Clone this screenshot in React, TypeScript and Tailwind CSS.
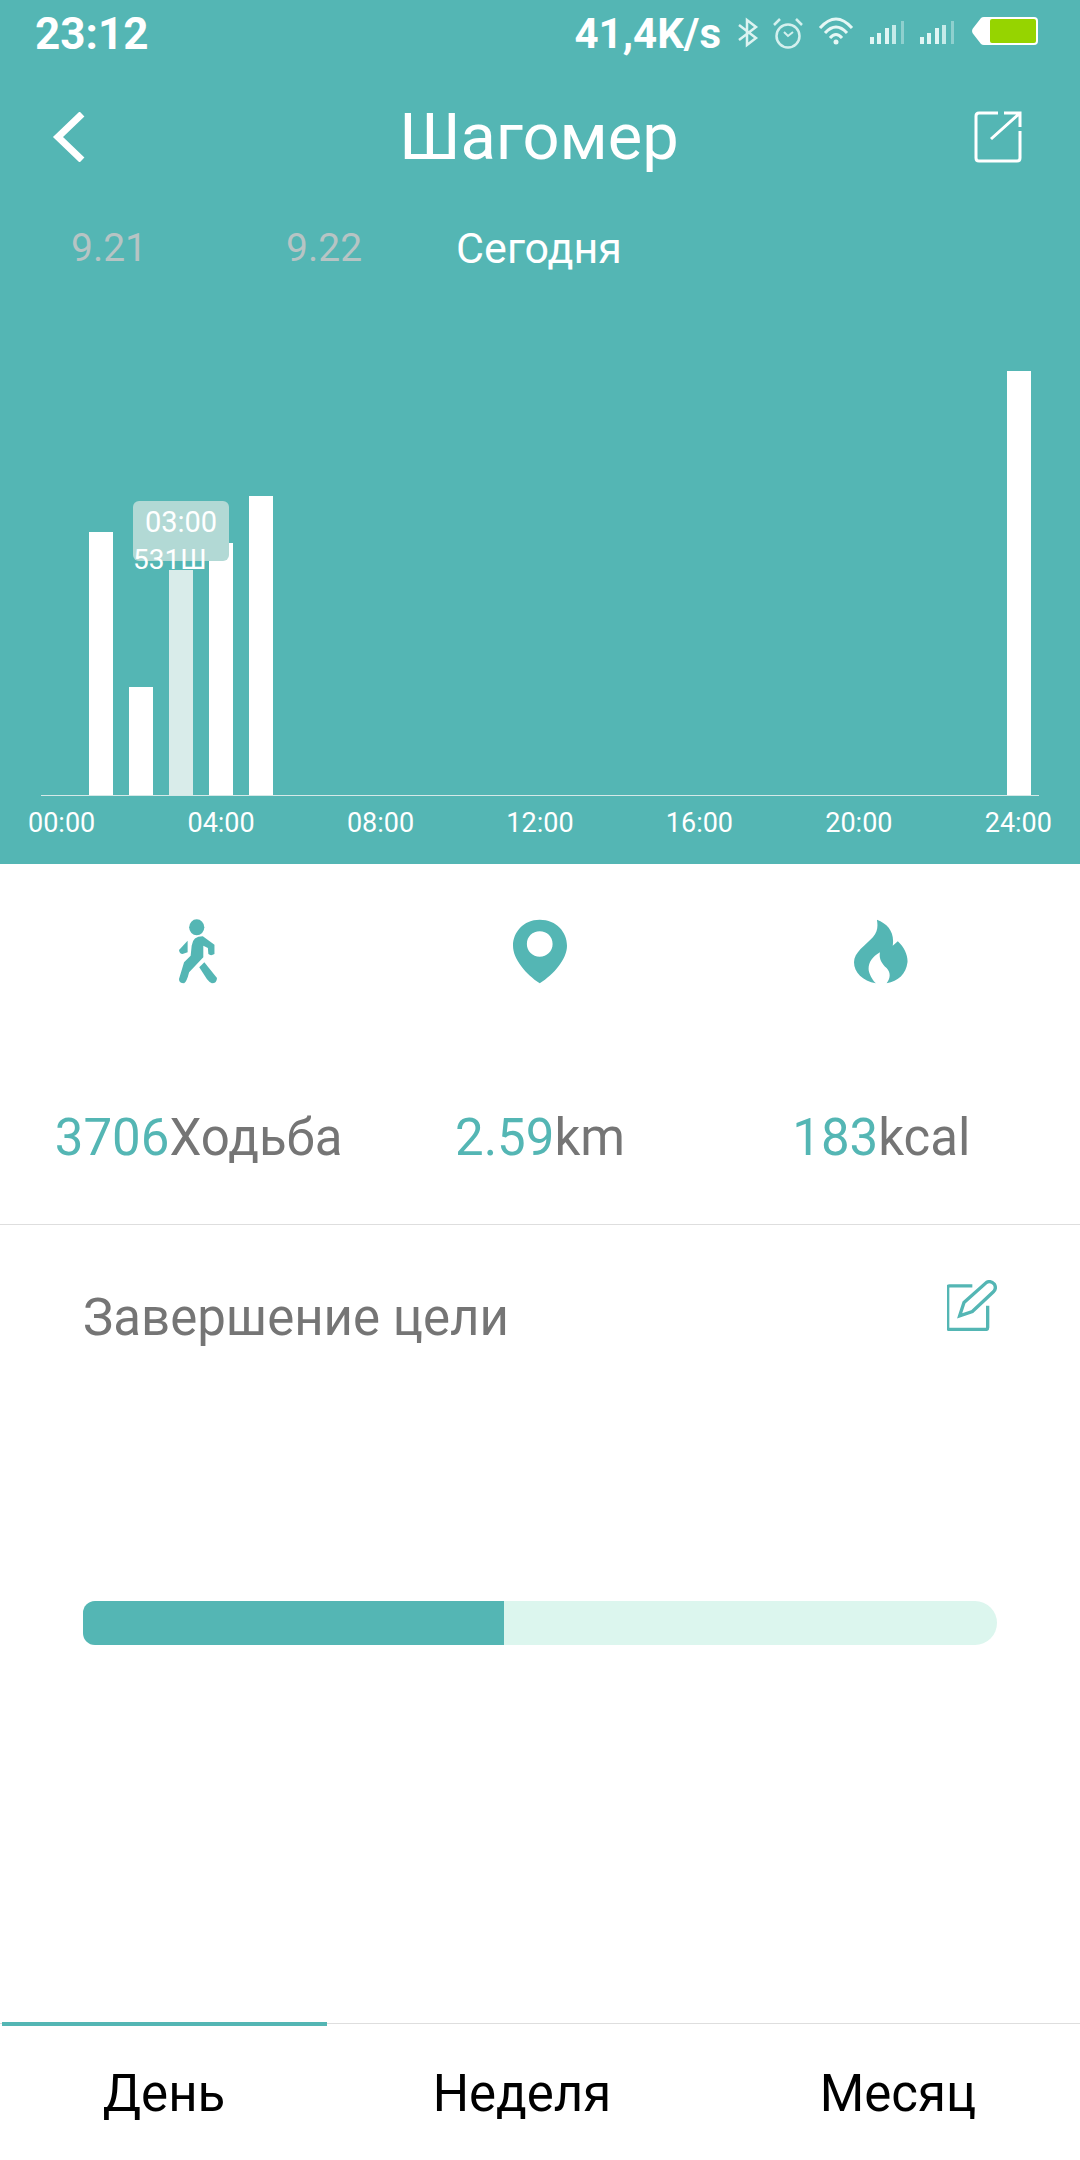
import React from 'react';

const bars = [
  { h: 263, light: false },
  { h: 108, light: false },
  { h: 225, light: true },
  { h: 252, light: false },
  { h: 299, light: false },
];

const hours = ['00:00', '04:00', '08:00', '12:00', '16:00', '20:00', '24:00'];

// coordinates here are page pixels, the svg sits at x=730 inside the 68px status bar
function StatusIcons() {
  return (
    <svg width="320" height="68" viewBox="730 0 320 68" className="shrink-0">
      <path d="M739 25 L756 38 L747 45 L747 20 L756 27 L739 40" fill="none" stroke="#ddf3f1" strokeWidth="2.5" />
      <circle cx="788" cy="36" r="11.5" fill="none" stroke="#d4f0ee" strokeWidth="2.5" />
      <path d="M784 32 L788 36 L793 32" fill="none" stroke="#d4f0ee" strokeWidth="2" />
      <path d="M774 25 L780 19 M802 25 L796 19" stroke="#d4f0ee" strokeWidth="2.5" />
      <path d="M820 28 Q836 10 852 28" fill="none" stroke="#e6f7f5" strokeWidth="3" />
      <path d="M825 33 Q836 21 847 33" fill="none" stroke="#e6f7f5" strokeWidth="3" />
      <path d="M830 38 Q836 31 842 38" fill="none" stroke="#e6f7f5" strokeWidth="3" />
      <circle cx="836" cy="42" r="2.5" fill="#e6f7f5" />
      {[0, 50].map((dx) => (
        <g key={dx} transform={`translate(${dx} 0)`}>
          <rect x="870" y="37" width="4" height="7" fill="#e2f6f5" />
          <rect x="877" y="33" width="4" height="11" fill="#e2f6f5" />
          <rect x="885" y="28" width="4" height="16" fill="#e2f6f5" />
          <rect x="892" y="25" width="4" height="19" fill="#c5ebe9" />
          <rect x="901" y="21" width="3" height="23" fill="#8fd0ce" />
        </g>
      ))}
      <path d="M972 31 Q972 29 974 27 L981 18 Q982 17 984 17 L1034 17 Q1038 17 1038 21 L1038 41 Q1038 45 1034 45 L984 45 Q982 45 981 44 L974 35 Q972 33 972 31 Z" fill="#ffffff" />
      <rect x="990" y="19" width="46" height="24" rx="2" fill="#96d400" />
    </svg>
  );
}

function WalkIcon() {
  return (
    <svg width="39" height="65" viewBox="75 85 77 195" preserveAspectRatio="none" fill="#54b6b4">
      <ellipse cx="110" cy="110" rx="15" ry="24" />
      <path d="M92 150 L75 178 Q76 190 82 190 L92 185 Z" />
      <path d="M100 165 Q102 137 122 137 L145 162 L145 190 Q138 197 133 190 L132 172 L123 165 L123 200 L95 245 Q90 275 85 278 Q75 278 75 265 L85 215 L98 195 Z" />
      <path d="M115 230 L125 215 L150 262 Q150 278 140 278 Q135 275 130 265 Z" />
    </svg>
  );
}

function PinIcon() {
  return (
    <svg width="54" height="65" viewBox="730 85 105 195" preserveAspectRatio="none" fill="#54b6b4">
      <path fillRule="evenodd" d="M782 87 C815 87 835 125 835 165 C835 205 810 250 782 278 C755 250 730 205 730 165 C730 125 750 87 782 87 Z M782 122 C768 122 757 138 757 160 C757 182 768 198 782 198 C796 198 807 182 807 160 C807 138 796 122 782 122 Z" />
    </svg>
  );
}

function FlameIcon() {
  return (
    <svg width="54" height="65" viewBox="1398 85 106 195" preserveAspectRatio="none" fill="#54b6b4">
      <path d="M1443 87 C1465 100 1478 125 1474 165 L1484 152 C1497 170 1504 195 1503 215 C1500 250 1485 272 1462 278 C1470 262 1470 245 1462 232 C1450 215 1447 200 1449 185 C1432 200 1425 220 1427 240 C1430 258 1435 268 1441 278 C1415 272 1398 245 1398 215 C1398 185 1420 165 1435 140 C1445 122 1445 105 1443 87 Z" />
    </svg>
  );
}

export default function App() {
  return (
    <div className="w-[1080px] h-[2160px] bg-white flex flex-col overflow-hidden" style={{ fontFamily: 'Roboto, "Noto Sans", sans-serif' }}>
      {/* teal header + chart */}
      <div className="bg-[#54b6b4] h-[864px] flex flex-col shrink-0">
        <div className="h-[68px] pl-[35px] pr-[30px] flex items-center justify-between text-white font-bold leading-none">
          <span className="text-[44px]">23:12</span>
          <div className="flex items-center gap-[9px]">
            <span className="text-[42px]">41,4K/s</span>
            <StatusIcons />
          </div>
        </div>

        <div className="h-[138px] pl-[52px] pr-[58px] flex items-center justify-between text-white">
          <svg width="33" height="50" viewBox="0 0 33 50" fill="none" stroke="#fff" strokeWidth="7">
            <path d="M30 2 L6 25 L30 48" />
          </svg>
          <span className="ml-[19px] text-[65px] leading-none">Шагомер</span>
          <svg width="48" height="52" viewBox="0 0 48 52" fill="none" stroke="#fff" strokeWidth="3">
            <path d="M24 2 L5 2 Q2 2 2 5 L2 47 Q2 50 5 50 L43 50 Q46 50 46 47 L46 20" />
            <path d="M17 28 L46 2 M30 2 L46 2 L46 16" />
          </svg>
        </div>

        <div className="flex items-center h-[84px] leading-none">
          <span className="ml-[71px] text-[39px] text-[#b7c4c4]">9.21</span>
          <span className="ml-[139px] text-[39px] text-[#b7c4c4]">9.22</span>
          <span className="ml-[94px] text-[43px] text-white">Сегодня</span>
        </div>

        {/* chart */}
        <div className="relative h-[425px] mt-[80px] mx-[41px] border-b-[1px] border-[#d5e9e8] flex items-end pl-[48px] pr-[8px] gap-[16px] box-content">
          {bars.map((b, i) => (
            <div key={i} className={`w-[24px] ${b.light ? 'bg-[#d9ecea]' : 'bg-white'}`} style={{ height: b.h }} />
          ))}
          <div className="w-[24px] ml-auto h-[424px] bg-white" />

          {/* tooltip */}
          <div className="absolute left-[92px] top-[131px] w-[96px] h-[60px] rounded-[6px] bg-[#b2d9d5] text-white text-[29px] leading-none flex justify-center pt-[7px]">
            03:00
          </div>
          <span className="absolute left-[92px] top-[176px] text-white text-[28px] leading-none">531Ш</span>
        </div>

        <div className="flex justify-between pl-[28px] pr-[28px] mt-[14px] text-white text-[27px] leading-none">
          {hours.map((h) => (
            <span key={h}>{h}</span>
          ))}
        </div>
      </div>

      {/* stats */}
      <div className="h-[361px] border-b-[1px] border-[#dedede] shrink-0 px-[28px]">
        <div className="grid grid-cols-3 pt-[55px] h-[186px]">
          <div className="flex justify-center"><WalkIcon /></div>
          <div className="flex justify-center"><PinIcon /></div>
          <div className="flex justify-center"><FlameIcon /></div>
        </div>
        <div className="grid grid-cols-3 text-[51px] leading-none text-[#757575] mt-[62px]">
          <div className="text-center whitespace-nowrap"><span className="text-[#54b6b4]">3706</span>Ходьба</div>
          <div className="text-center whitespace-nowrap"><span className="text-[#54b6b4]">2.59</span>km</div>
          <div className="text-center whitespace-nowrap"><span className="text-[#54b6b4]">183</span>kcal</div>
        </div>
      </div>

      {/* goal */}
      <div className="flex-1 px-[83px] pt-[67px]">
        <div className="flex justify-between items-start">
          <span className="text-[#757575] text-[51px] leading-none">Завершение цели</span>
          <svg width="50" height="51" viewBox="84 58 150 152" fill="none" stroke="#54b6b4" strokeWidth="10" className="-mt-[12px]">
            <path d="M160 75 L92 75 Q86 75 86 81 L86 200 Q86 206 92 206 L200 206 Q206 206 206 200 L206 135" />
            <path d="M122 165 L135 125 L202 65 Q215 58 226 70 Q233 82 224 92 L160 152 Z" />
          </svg>
        </div>
        <div className="mt-[258px] h-[44px] bg-[#dcf6ee] rounded-l-[12px] rounded-r-[22px] overflow-hidden">
          <div className="h-full w-[421px] bg-[#54b6b4]" />
        </div>
      </div>

      {/* tabs */}
      <div className="relative h-[137px] pt-[3px] border-t-[1px] border-[#dedede] grid grid-cols-[328px_388px_1fr] items-center text-black text-[51px] leading-none shrink-0">
        <div className="absolute left-[2px] top-[-2px] w-[325px] h-[4px] bg-[#54b6b4]" />
        <span className="text-center">День</span>
        <span className="text-center">Неделя</span>
        <span className="text-center">Месяц</span>
      </div>
    </div>
  );
}
